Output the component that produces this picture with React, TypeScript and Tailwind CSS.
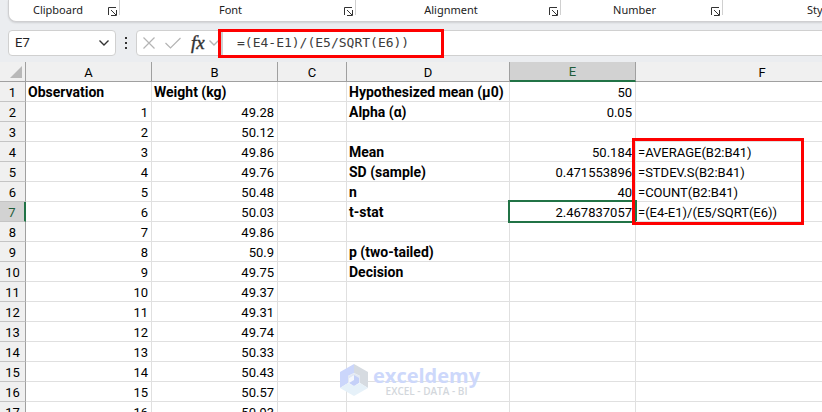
import React from "react";

type Row = {
  a?: string;
  b?: string;
  d?: string;
  e?: string;
  f?: string;
};

const columns = ["A", "B", "C", "D", "E", "F"];

const rows: Row[] = [
  { a: "Observation", b: "Weight (kg)", d: "Hypothesized mean (μ0)", e: "50" },
  { a: "1", b: "49.28", d: "Alpha (α)", e: "0.05" },
  { a: "2", b: "50.12" },
  { a: "3", b: "49.86", d: "Mean", e: "50.184", f: "=AVERAGE(B2:B41)" },
  { a: "4", b: "49.76", d: "SD (sample)", e: "0.471553896", f: "=STDEV.S(B2:B41)" },
  { a: "5", b: "50.48", d: "n", e: "40", f: "=COUNT(B2:B41)" },
  { a: "6", b: "50.03", d: "t-stat", e: "2.467837057", f: "=(E4-E1)/(E5/SQRT(E6))" },
  { a: "7", b: "49.86" },
  { a: "8", b: "50.9", d: "p (two-tailed)" },
  { a: "9", b: "49.75", d: "Decision" },
  { a: "10", b: "49.37" },
  { a: "11", b: "49.31" },
  { a: "12", b: "49.74" },
  { a: "13", b: "50.33" },
  { a: "14", b: "50.43" },
  { a: "15", b: "50.57" },
  { a: "16", b: "50.93" },
];

const SELECTED_ROW = 7;
const SELECTED_COLUMN = "E";

const cell = "h-5 border-r border-b border-[#e0e0e0] pt-[2px] pr-[3px] pb-0 pl-[2px] whitespace-nowrap";

function LauncherIcon() {
  return (
    <svg width="9" height="9" viewBox="0 0 9 9" fill="none" stroke="#333">
      <path d="M0.5 8V0.5H8" />
      <path d="M8.5 3V8.5H3" />
      <path d="M3 3L8 8" />
    </svg>
  );
}

function ChevronIcon({ color }: { color: string }) {
  return (
    <svg width="10" height="6" viewBox="0 0 10 6" fill="none" stroke={color} strokeWidth="1.4">
      <path d="M0.5 0.5L5 5L9.5 0.5" />
    </svg>
  );
}

function RibbonGroup({ label, width, launcher = true }: { label: string; width: string; launcher?: boolean }) {
  return (
    <div className={`relative flex shrink-0 items-center justify-center ${width}`}>
      <span>{label}</span>
      {launcher && (
        <>
          <button aria-label={`${label} settings`} className="absolute right-[3px] bottom-[5px]">
            <LauncherIcon />
          </button>
          <span className="absolute top-0 right-0 h-[15px] w-px bg-[#d0d0d0]" />
        </>
      )}
    </div>
  );
}

function Ribbon() {
  return (
    <div className="ml-2 flex h-[22px] shrink-0 overflow-hidden rounded-bl-lg border-b border-l border-[#cfcfd1] bg-white text-[11px] text-[#222] shadow-[0_1px_2px_rgba(0,0,0,0.12)]">
      <RibbonGroup label="Clipboard" width="w-[111px] pr-[13px]" />
      <RibbonGroup label="Font" width="w-[236px] pr-[15px]" />
      <RibbonGroup label="Alignment" width="w-[205px] pr-[15px]" />
      <RibbonGroup label="Number" width="w-[162px] pr-[15px]" />
      <RibbonGroup label="Styles" width="w-[198px]" launcher={false} />
    </div>
  );
}

function FormulaBar() {
  return (
    <div className="flex h-[40px] shrink-0 items-center pt-px pl-2">
      <div className="flex h-[26px] w-[108px] items-center rounded border border-[#d0d0d0] bg-white px-[6px]">
        <input
          aria-label="Name Box"
          defaultValue="E7"
          className="min-w-0 flex-1 bg-transparent font-[Roboto,sans-serif] text-[13px] text-[#222] outline-none"
        />
        <button aria-label="Open name list">
          <ChevronIcon color="#333" />
        </button>
      </div>
      <svg width="20" height="12" viewBox="0 0 20 12" fill="#333">
        <path d="M9 0h2v2H9zM9 5h2v2H9zM9 10h2v2H9z" />
      </svg>
      <div className="flex h-[26px] w-[86px] items-center rounded-l border border-[#d0d0d0] bg-white pl-[6px]">
        <button aria-label="Cancel">
          <svg width="12" height="12" viewBox="0 0 12 12" fill="none" stroke="#b4b4b4" strokeWidth="1.2">
            <path d="M0.5 0.5L11.5 11.5M11.5 0.5L0.5 11.5" />
          </svg>
        </button>
        <button aria-label="Enter" className="ml-[10px]">
          <svg width="16" height="12" viewBox="0 0 16 12" fill="none" stroke="#b4b4b4" strokeWidth="1.2">
            <path d="M0.5 6L5.5 11L15.5 1" />
          </svg>
        </button>
        <button
          aria-label="Insert function"
          className="ml-[10px] font-['Liberation_Serif',serif] text-[19px] leading-5 text-[#333] italic [-webkit-text-stroke:0.4px_#333]"
        >
          fx
        </button>
        <button aria-label="More functions" className="ml-1">
          <ChevronIcon color="#b4b4b4" />
        </button>
      </div>
      <div className="relative flex h-[26px] min-w-0 flex-1 items-center border-y border-l border-[#d0d0d0] bg-white">
        <input
          aria-label="Formula"
          defaultValue="=(E4-E1)/(E5/SQRT(E6))"
          className="min-w-0 flex-1 bg-transparent pl-[14px] font-['DejaVu_Sans_Mono',monospace] text-[13px] text-[#3c3c3c] outline-none"
        />
        <div className="pointer-events-none absolute top-[-2px] left-[-5px] h-[29px] w-[226px] border-3 border-[#fe0000]" />
      </div>
    </div>
  );
}

function Watermark() {
  return (
    <div className="pointer-events-none absolute top-[302px] left-[340px] flex items-center gap-[5px]">
      <svg width="28" height="32" viewBox="0 0 28 32">
        <path d="M14 0L0 8V24L8 19V12L14 9Z" fill="#cbd6fb" />
        <path d="M14 0L28 8V24L20 19V12L14 9Z" fill="#d6dbe1" />
        <path d="M0 24L8 19L14 22L20 19L28 24L14 32Z" fill="#e6f1f9" />
        <path d="M8 12L14 9L20 12V19L14 16L8 19Z" fill="#e3e9f3" />
        <path d="M14 11L19 14V19L14 22L9 19V14Z" fill="#c4d0f8" />
        <path d="M9 14L14 11V16L9 19Z" fill="#f4f7fd" />
      </svg>
      <div className="flex flex-col items-center font-['Open_Sans',sans-serif]">
        <span className="text-[20px] leading-[22px] font-bold text-[#cdd8fb]">exceldemy</span>
        <span className="text-[10px] leading-[8px] font-semibold text-[#d3d7dc]">EXCEL - DATA - BI</span>
      </div>
    </div>
  );
}

function Sheet() {
  return (
    <div className="relative min-h-0 flex-1 overflow-hidden bg-white">
      <table className="w-full min-w-[889px] table-fixed border-separate border-spacing-0 font-[Roboto,sans-serif] text-[13px] leading-[17px] text-black">
        <colgroup>
          <col className="w-[26px]" />
          <col className="w-[126px]" />
          <col className="w-[126px]" />
          <col className="w-[69px]" />
          <col className="w-[163px]" />
          <col className="w-[126px]" />
          <col />
        </colgroup>
        <thead>
          <tr>
            <th className="h-5 border-r border-b border-[#a0a0a0] bg-[#f0f0f0] p-0">
              <svg className="mr-[3px] ml-auto" width="12" height="12" viewBox="0 0 12 12">
                <path d="M12 0V12H0Z" fill="#b8b8b8" />
              </svg>
            </th>
            {columns.map((name) => (
              <th
                key={name}
                className={
                  name === SELECTED_COLUMN
                    ? "h-5 border-r border-b-2 border-r-[#a0a0a0] border-b-[#217346] bg-[#d2d2d2] p-0 pt-px font-normal text-[#1e5c3a]"
                    : "h-5 border-r border-b border-[#a0a0a0] bg-[#f0f0f0] p-0 pt-px font-normal"
                }
              >
                {name}
              </th>
            ))}
          </tr>
        </thead>
        <tbody>
          {rows.map((row, i) => {
            const number = i + 1;
            const selected = number === SELECTED_ROW;
            const heading = i === 0;
            return (
              <tr key={number}>
                <th
                  className={
                    selected
                      ? "h-5 border-r-2 border-b border-r-[#217346] border-b-[#c4c4c4] bg-[#d2d2d2] p-0 pt-[2px] font-normal text-[#1e5c3a]"
                      : "h-5 border-r border-b border-r-[#a0a0a0] border-b-[#c4c4c4] bg-[#f0f0f0] p-0 pt-[2px] font-normal"
                  }
                >
                  {number}
                </th>
                <td className={`${cell} ${heading ? "text-left text-[14px] font-bold" : "text-right"}`}>{row.a}</td>
                <td className={`${cell} ${heading ? "text-left text-[14px] font-bold" : "text-right"}`}>{row.b}</td>
                <td className={cell} />
                <td className={`${cell} text-[14px] font-bold`}>{row.d}</td>
                <td className={`${cell} relative text-right`}>
                  {row.e}
                  {selected && (
                    <span className="absolute -inset-[2px] border-2 border-[#217346]">
                      <span className="absolute -right-[2px] -bottom-[2px] size-1 bg-[#217346]" />
                    </span>
                  )}
                </td>
                <td className={`${cell} relative`}>
                  {row.f}
                  {number === 4 && (
                    <span className="pointer-events-none absolute -top-[4px] -left-[4px] z-10 h-[87px] w-[172px] border-3 border-[#fe0000]" />
                  )}
                </td>
              </tr>
            );
          })}
        </tbody>
      </table>
      <Watermark />
    </div>
  );
}

export default function App() {
  return (
    <div className="flex h-screen flex-col overflow-hidden bg-[#ebedf0] font-['Noto_Sans',sans-serif]">
      <Ribbon />
      <FormulaBar />
      <Sheet />
    </div>
  );
}
